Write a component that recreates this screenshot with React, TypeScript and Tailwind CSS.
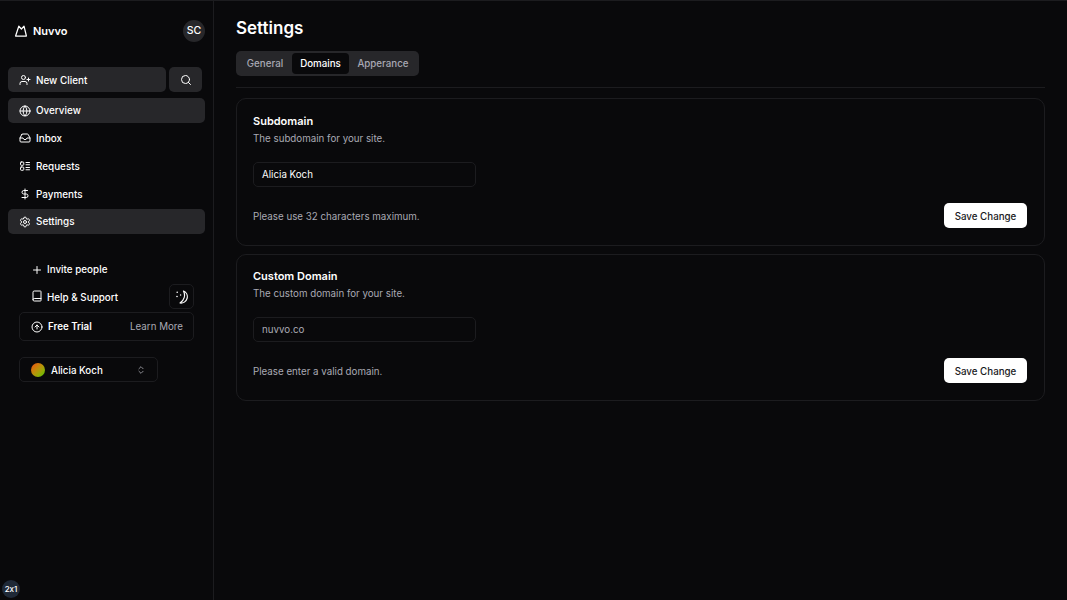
import { ArrowUpCircle, Book, ChevronsUpDown, DollarSign, Globe, Inbox, Plus, Search, Settings, UserPlus } from 'lucide-react';

const RequestsIcon = ({ size = 12 }: { size?: number }) => (
    <svg width={size} height={size} viewBox="0 0 24 24" fill="none" stroke="currentColor" strokeWidth="2" strokeLinecap="round" strokeLinejoin="round">
        <rect x="3" y="4" width="6.5" height="6.5" rx="1.5" />
        <rect x="3" y="14" width="6.5" height="6.5" rx="1.5" />
        <path d="M14 5h7M14 9.5h7M14 15h7M14 19.5h7" />
    </svg>
);

const navItems = [
    { label: 'Overview', icon: Globe, active: true },
    { label: 'Inbox', icon: Inbox },
    { label: 'Requests', icon: RequestsIcon },
    { label: 'Payments', icon: DollarSign },
    { label: 'Settings', icon: Settings, active: true },
];

const DomainCard = ({ title, desc, value, hint, muted, short }: { title: string; desc: string; value: string; hint: string; muted?: boolean; short?: boolean }) => (
    <div className={`rounded-[10px] border border-[#1c1c1f] pl-4 pr-[17px] ${short ? 'h-[147px] pt-[13px]' : 'h-[148px] pt-[14px]'}`}>
        <h3 className="text-[11px] leading-[16px] font-semibold text-white">{title}</h3>
        <p className="mt-[2px] text-[9.75px] leading-[16px] text-[#a9a9b4]">{desc}</p>
        <div className={`mt-[15px] flex h-[25px] w-[223px] items-center rounded-[5px] border border-[#1c1c1f] px-2 pt-px text-[9.75px] ${muted ? 'text-[#a9a9b4]' : 'text-white'}`}>
            {value}
        </div>
        <div className="mt-4 flex h-[25px] items-center justify-between">
            <span className="pt-[4px] text-[9.75px] text-[#a9a9b4]">{hint}</span>
            <button className="flex h-[25px] w-[83px] items-center justify-center rounded-[5px] bg-white pt-[3px] text-[9.75px] font-medium text-[#18181b]">
                Save Change
            </button>
        </div>
    </div>
);

const MoonStars = () => (
    <svg width="14" height="14" viewBox="0 0 14 14" fill="none" stroke="white" strokeLinecap="round" strokeLinejoin="round">
        <path d="M8.5 1 A6.3 6.3 0 0 1 5 13 A9 9 0 0 0 8.5 1 Z" strokeWidth="1.2" />
        <circle cx="2.2" cy="2.2" r="0.8" fill="white" stroke="none" />
        <circle cx="2" cy="6.5" r="0.8" fill="white" stroke="none" />
        <circle cx="5.6" cy="5" r="0.7" fill="white" stroke="none" />
    </svg>
);

const App = () => {
    return (
        <div className="relative flex h-[600px] w-[1067px] overflow-hidden border-t border-[#1c1c1f] bg-[#09090b] font-['Inter',sans-serif] text-white">
            <aside className="flex w-[214px] shrink-0 flex-col border-r border-[#1c1c1f]">
                <div className="mt-[19px] flex h-[22px] items-center justify-between pl-[15px] pr-2">
                    <div className="flex items-center gap-[6px]">
                        <svg width="12" height="12" viewBox="0 0 12 12" fill="none" stroke="white" strokeWidth="1.25" strokeLinejoin="round">
                            <path d="M0.6 11 L3.8 1.2 L6.4 4 L9 1.2 L11.4 11 Z" />
                        </svg>
                        <span className="text-[11px] font-semibold">Nuvvo</span>
                    </div>
                    <div className="flex size-[22px] items-center justify-center rounded-full bg-[#27272a] text-[10.5px] font-medium">SC</div>
                </div>

                <div className="mt-[25px] flex gap-[3px] pl-2">
                    <button className="flex h-[25px] w-[158px] items-center gap-[5px] rounded-[5px] bg-[#27272a] pl-[11px] text-[9.9px] font-medium">
                        <UserPlus size={12} />
                        <span className="pt-px">New Client</span>
                    </button>
                    <button className="flex h-[25px] w-[33px] items-center justify-center rounded-[5px] bg-[#27272a]">
                        <Search size={12} />
                    </button>
                </div>

                <nav className="mt-[6px] flex flex-col gap-[2.75px] px-2">
                    {navItems.map((item) => (
                        <a key={item.label} className={`flex h-[25px] items-center gap-[5px] rounded-[5px] pl-[11px] text-[9.9px] font-medium ${item.active ? 'bg-[#27272a]' : ''}`}>
                            <item.icon size={12} />
                            <span className={item.label === 'Payments' ? 'pt-[2px]' : ''}>{item.label}</span>
                        </a>
                    ))}
                </nav>

                <div className="mt-[23px] flex flex-col px-[19px]">
                    <a className="flex h-[25px] items-center gap-1 pl-3 text-[9.85px] font-medium">
                        <Plus size={12} />
                        Invite people
                    </a>
                    <div className="mt-[2px] flex h-[25px] items-center justify-between">
                        <a className="flex items-center gap-1 pl-3 text-[9.85px] font-medium">
                            <Book size={12} />
                            <span className="pt-[2px]">Help &amp; Support</span>
                        </a>
                        <button className="flex size-[25px] items-center justify-center rounded-[5px] border border-[#1c1c1f]">
                            <MoonStars />
                        </button>
                    </div>
                    <div className="mt-[3px] flex h-[29px] items-center justify-between rounded-[5px] border border-[#1c1c1f] pl-[11px] pr-[10px] text-[9.75px]">
                        <span className="flex items-center gap-[5px] font-semibold">
                            <ArrowUpCircle size={12} />
                            <span className="pt-[2px]">Free Trial</span>
                        </span>
                        <span className="pt-[2px] text-[#a9a9b4]">Learn More</span>
                    </div>
                    <div className="mt-4 flex h-[25px] w-[139px] items-center rounded-[5px] border border-[#1c1c1f] pl-[11px] text-[9.75px] font-medium">
                        <span className="size-[14px] rounded-full bg-gradient-to-br from-[#f0400f] to-[#1fc800]" />
                        <span className="ml-[6px] pt-[3px]">Alicia Koch</span>
                        <ChevronsUpDown size={10} className="ml-[33px] text-[#a1a1aa]" />
                    </div>
                </div>
            </aside>

            <main className="flex-1 pl-[22px] pr-[22px] pt-[15px]">
                <h1 className="text-[17px] leading-[24px] font-semibold">Settings</h1>
                <div className="mt-[11px] flex h-[25px] w-[183px] items-center rounded-[5px] bg-[#27272a] px-[2px] text-[9.75px] font-medium text-[#a9a9b4]">
                    <span className="flex h-[21px] w-[54px] items-center justify-center pt-px">General</span>
                    <span className="flex h-[21px] w-[57px] items-center justify-center rounded-[4px] bg-[#09090b] pt-px text-white">Domains</span>
                    <span className="flex h-[21px] flex-1 items-center justify-center pt-px">Apperance</span>
                </div>
                <div className="mt-[11px] h-px bg-[#1c1c1f]" />
                <div className="mt-[10px] flex flex-col gap-2">
                    <DomainCard title="Subdomain" desc="The subdomain for your site." value="Alicia Koch" hint="Please use 32 characters maximum." />
                    <DomainCard short title="Custom Domain" desc="The custom domain for your site." value="nuvvo.co" hint="Please enter a valid domain." muted />
                </div>
            </main>

            <div className="absolute bottom-[2px] left-[2px] flex size-[18px] items-center justify-center rounded-full bg-[#1f2937] text-[8px] font-medium [font-feature-settings:'calt'_0]">2x1</div>
        </div>
    );
};

export default App;
